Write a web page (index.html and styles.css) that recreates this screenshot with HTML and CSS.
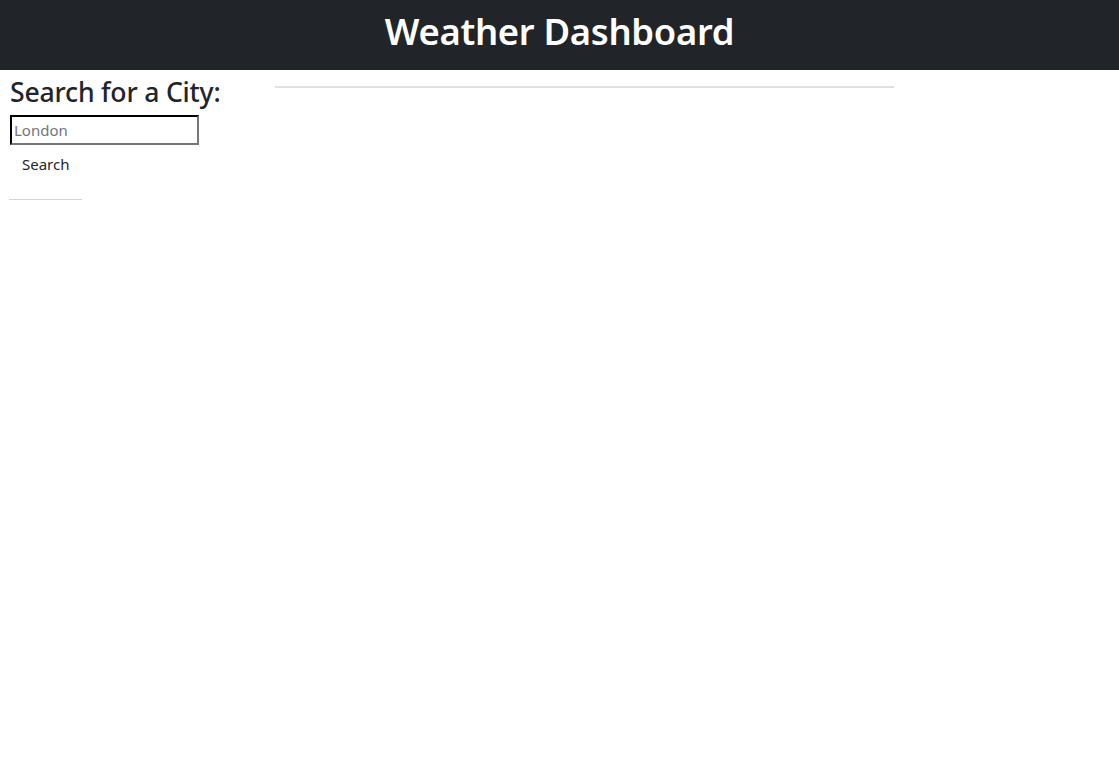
FILE: index.html
```html
<!DOCTYPE html>
<html lang="en">
<head>
<meta charset="utf-8">
<title>Weather Dashboard</title>
<link rel="stylesheet" href="styles.css">
</head>
<body>
<header class="topbar">
  <h1 class="title">Weather Dashboard</h1>
</header>
<div class="layout">
  <aside class="sidebar">
    <h3 class="search-title">Search for a City:</h3>
    <input class="city-input" type="text" placeholder="London">
    <button class="search-btn" type="button">Search</button>
    <hr class="history-rule">
  </aside>
  <main class="content">
    <div class="current-weather"></div>
  </main>
</div>
</body>
</html>
```

FILE: styles.css
```css
* { box-sizing: border-box; }
html, body { margin: 0; padding: 0; background: #fff; }
body {
  font-family: "Noto Sans", "Open Sans", sans-serif;
  color: #212529;
  font-size: 16px;
}
.topbar {
  background: #212529;
  height: 70px;
  display: flex;
  align-items: center;
  justify-content: center;
}
.title {
  margin: 0 0 8px 0;
  color: #fff;
  font-size: 36.4px;
  font-weight: 600;
  letter-spacing: -0.3px;
}
.layout {
  display: flex;
  align-items: flex-start;
}
.sidebar {
  width: 275px;
  padding: 7px 0 0 10px;
  display: flex;
  flex-direction: column;
  align-items: flex-start;
}
.search-title {
  margin: 0 0 7px 0;
  font-size: 26.6px;
  font-weight: 500;
  line-height: 31px;
  letter-spacing: -0.2px;
}
.city-input {
  width: 189px;
  height: 30px;
  border: 2px inset #767676;
  border-top-color: #1a1a1a;
  border-left-color: #1a1a1a;
  padding: 0 2px;
  font-family: inherit;
  font-size: 15px;
  color: #212529;
}
.city-input::placeholder { color: #757575; }
.search-btn {
  margin-top: 7px;
  background: none;
  border: 0;
  padding: 2px 12px;
  font-family: inherit;
  font-size: 15px;
  color: #212529;
}
.history-rule {
  margin: 23px 0 0 -1px;
  width: 73px;
  border: 0;
  border-top: 1px solid #d3d3d3;
}
.content {
  flex: 0 0 auto;
}
.current-weather {
  margin-top: 16px;
  width: 619px;
  border-top: 2px solid #dee2e6;
}
```
